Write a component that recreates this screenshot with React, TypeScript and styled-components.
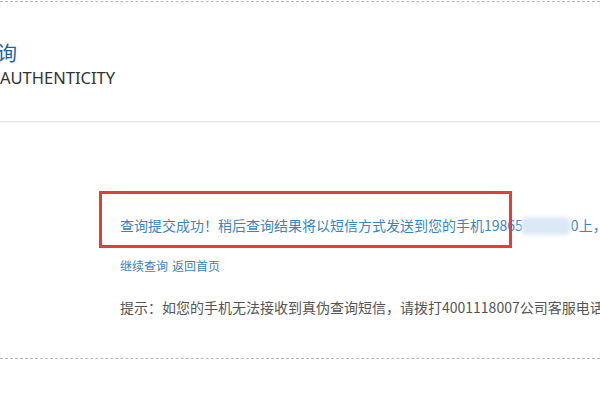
import React from "react";
import styled, { createGlobalStyle } from "styled-components";

const GlobalStyle = createGlobalStyle`
  html, body {
    margin: 0;
    padding: 0;
    background: #fff;
    overflow: hidden;
  }
  body {
    font-family: "Noto Sans", "Noto Sans CJK SC", sans-serif;
  }
`;

const Page = styled.div`
  width: 600px;
  margin-top: 1px;
  border-top: 1px dashed #b8b8b8;
`;

const Header = styled.header`
  height: 82px;
  padding-top: 37px;
  border-bottom: 1px solid #e6e6e6;
  box-shadow: 0 1px 0 #f6f6f6;
`;

const Title = styled.h1`
  margin: 0 0 0 -3px;
  font-family: "Noto Sans CJK SC", sans-serif;
  font-size: 20px;
  font-weight: 400;
  line-height: 28px;
  color: #245f9d;
`;

const Subtitle = styled.p`
  margin: 0;
  font-family: "Noto Sans", sans-serif;
  font-size: 16.5px;
  line-height: 22px;
  color: #333;
`;

const Result = styled.section`
  position: relative;
  height: 237px;
  padding-left: 120px;
  padding-top: 93px;
  box-sizing: border-box;
  border-bottom: 1px dashed #b8b8b8;
  font-family: "Noto Sans CJK SC", sans-serif;
`;

const Line = styled.p<{ $size: number; $color: string; $gap: number }>`
  margin: ${({ $gap }) => $gap}px 0 0;
  white-space: nowrap;
  font-size: ${({ $size }) => $size}px;
  line-height: ${({ $size }) => $size + 6}px;
  color: ${({ $color }) => $color};
`;

const Link = styled.a`
  color: #3a7fc0;
  text-decoration: none;
  & + & {
    margin-left: 4px;
  }
`;

const Blur = styled.span`
  display: inline-block;
  width: 50px;
  height: 18px;
  margin-left: -2px;
  vertical-align: -4px;
  background: #dbe8f5;
  border-radius: 6px;
  filter: blur(2px);
`;

const Marker = styled.div`
  position: absolute;
  left: 99px;
  top: 69px;
  width: 413px;
  height: 57px;
  box-sizing: border-box;
  border: 3px solid #e53d3d;
`;

export default function App() {
  return (
    <>
      <GlobalStyle />
      <Page>
        <Header>
          <Title>询</Title>
          <Subtitle>AUTHENTICITY</Subtitle>
        </Header>
        <Result>
          <Line $size={14} $color="#3b84c4" $gap={0}>
            查询提交成功！稍后查询结果将以短信方式发送到您的手机19865
            <Blur />
            0上，请注意查收。
          </Line>
          <Line $size={12} $color="#3a7fc0" $gap={22}>
            <Link href="#">继续查询</Link>
            <Link href="#">返回首页</Link>
          </Line>
          <Line $size={14} $color="#555" $gap={22}>
            提示：如您的手机无法接收到真伪查询短信，请拨打4001118007公司客服电话。
          </Line>
          <Marker />
        </Result>
      </Page>
    </>
  );
}
